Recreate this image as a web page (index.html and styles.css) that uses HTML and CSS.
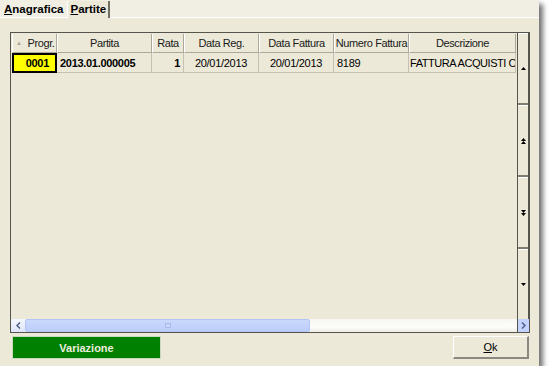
FILE: index.html
```html
<!DOCTYPE html>
<html>
<head lang="it">
    <meta charset="UTF-8">
    <title>Partite</title>
    <link rel="stylesheet" href="styles.css">
</head>
<body>
<div class="window">
    <div class="tabs">
        <div class="tab"><u>A</u>nagrafica</div>
        <div class="tab active"><u>P</u>artite</div>
    </div>
    <div class="panel">
        <div class="grid">
            <div class="gridMain">
                <div class="gridBody">
                    <div class="rows">
                        <div class="hcell first"><span class="sort">&#9650;</span>Progr.</div>
                        <div class="hcell">Partita</div>
                        <div class="hcell">Rata</div>
                        <div class="hcell">Data Reg.</div>
                        <div class="hcell">Data Fattura</div>
                        <div class="hcell">Numero Fattura</div>
                        <div class="hcell">Descrizione</div>

                        <div class="cell sel">0001</div>
                        <div class="cell bold left">2013.01.000005</div>
                        <div class="cell bold right">1</div>
                        <div class="cell center">20/01/2013</div>
                        <div class="cell center">20/01/2013</div>
                        <div class="cell left">8189</div>
                        <div class="cell left clip">FATTURA ACQUISTI C</div>
                    </div>
                </div>
                <div class="vscroll">
                    <div class="seg"><svg width="5" height="3" viewBox="0 0 5 3"><path d="M2.5 0 L5 3 L0 3Z" fill="#000"/></svg></div>
                    <div class="seg"><svg width="5" height="6" viewBox="0 0 5 6"><path d="M2.5 0 L5 3 L0 3Z M2.5 3 L5 6 L0 6Z" fill="#000"/></svg></div>
                    <div class="seg"><svg width="5" height="6" viewBox="0 0 5 6"><path d="M0 0 L5 0 L2.5 3Z M0 3 L5 3 L2.5 6Z" fill="#000"/></svg></div>
                    <div class="seg"><svg width="5" height="3" viewBox="0 0 5 3"><path d="M0 0 L5 0 L2.5 3Z" fill="#000"/></svg></div>
                </div>
            </div>
            <div class="hscroll">
                <div class="arrow"><svg width="5" height="7" viewBox="0 0 5 7"><path d="M4 0.5 L1 3.5 L4 6.5" fill="none" stroke="#4d6185" stroke-width="1.5"/></svg></div>
                <div class="track">
                    <div class="thumb"><span class="grip"></span></div>
                </div>
                <div class="arrow corner"><svg width="5" height="7" viewBox="0 0 5 7"><path d="M1 0.5 L4 3.5 L1 6.5" fill="none" stroke="#4d6185" stroke-width="1.5"/></svg></div>
            </div>
        </div>
        <div class="buttons">
            <div class="btn green">Variazione</div>
            <div class="btn ok"><u>O</u>k</div>
        </div>
    </div>
</div>
</body>
</html>
```

FILE: styles.css
```css
* {
    margin: 0;
    padding: 0;
    box-sizing: border-box;
}

body {
    background: #fff;
    font-family: "Liberation Sans", "DejaVu Sans", sans-serif;
    font-size: 11px;
    color: #000;
}

.window {
    width: 539px;
    height: 366px;
    background: #ece9d8;
    box-shadow: 4px 4px 5px rgba(0, 0, 0, 0.55);
}

.tabs {
    display: flex;
    height: 18px;
    padding: 1px 0 0 2px;
    background: #f1efe4;
    border-bottom: 1px solid #fff;
}

.tab {
    font-weight: bold;
    font-size: 11.5px;
    padding: 2px 2px 0 2px;
    height: 16px;
    margin-right: 2px;
}

.tab.active {
    background: #ece9d8;
    border-left: 1px solid #fff;
    border-right: 2px solid #716f64;
    padding: 2px 2px 0 2px;
    height: 17px;
}

.panel {
    padding: 14px 0 0 10px;
}

.grid {
    width: 520px;
    height: 301px;
    border: 1px solid #55544d;
    display: flex;
    flex-direction: column;
}

.gridMain {
    display: flex;
    height: 286px;
}

.gridBody {
    width: 506px;
    padding: 1px 0 0 1px;
    overflow: hidden;
}

.rows {
    display: grid;
    grid-template-columns: 45px 95px 32px 75px 75px 75px 107px;
    grid-template-rows: 19px 20px;
    letter-spacing: -0.3px;
}

.hcell {
    display: flex;
    align-items: center;
    justify-content: center;
    border-left: 1px solid #fff;
    border-right: 1px solid #aca899;
    border-bottom: 1px solid #aca899;
    white-space: nowrap;
    color: #1a1a1a;
    letter-spacing: -0.4px;
}

.hcell.first {
    justify-content: flex-start;
    padding-left: 3px;
}

.sort {
    font-size: 6px;
    color: #aca899;
    margin-right: 6px;
}

.cell {
    display: flex;
    align-items: center;
    border-right: 1px solid #c4c1b3;
    border-bottom: 1px solid #c4c1b3;
    padding: 0 3px;
    white-space: nowrap;
    overflow: hidden;
}

.cell.sel {
    background: #ffff00;
    border: 2px solid #000;
    justify-content: flex-end;
    font-weight: bold;
    padding-right: 6px;
}

.bold {
    font-weight: bold;
}

.left {
    justify-content: flex-start;
}

.right {
    justify-content: flex-end;
}

.center {
    justify-content: center;
}

.clip {
    padding: 0 1px;
    letter-spacing: -0.45px;
}

.vscroll {
    width: 12px;
    display: flex;
    flex-direction: column;
    border-left: 1px solid #55544d;
    border-right: 1px solid #55544d;
}

.seg {
    flex: 1;
    display: flex;
    align-items: center;
    justify-content: center;
    border-top: 1px solid #fff;
    border-bottom: 2px solid #7f7d72;
    background: #ece9d8;
}

.seg:last-child {
    border-bottom: none;
}

.hscroll {
    display: flex;
    height: 13px;
}

.arrow {
    width: 14px;
    display: flex;
    align-items: center;
    justify-content: center;
    background: linear-gradient(#f4f7fe, #dfe6fb);
}

.arrow.corner {
    width: 12px;
    background: #c3d3fd;
    border-left: 1px solid #55544d;
}

.track {
    flex: 1;
    background: linear-gradient(#f7f6ef, #fdfdfb 60%, #eeede5);
}

.thumb {
    width: 285px;
    height: 13px;
    background: linear-gradient(#cad8fc, #bccdfa);
    border: 1px solid #b3c5f5;
    border-radius: 2px;
    display: flex;
    align-items: center;
    justify-content: center;
}

.grip {
    width: 6px;
    height: 5px;
    border: 1px solid #a9bbe9;
    background: #c6d4fb;
}

.buttons {
    display: flex;
    justify-content: space-between;
    width: 519px;
    margin-top: 3px;
    padding-left: 2px;
}

.btn {
    height: 23px;
    display: flex;
    align-items: center;
    justify-content: center;
}

.btn.green {
    width: 149px;
    background: #008000;
    color: #ededde;
    font-weight: bold;
    border: 1px solid #c9d9c0;
}

.btn.ok {
    width: 76px;
    background: #ece9d8;
    border-top: 1px solid #fff;
    border-left: 1px solid #fff;
    border-right: 2px solid #8b897f;
    border-bottom: 2px solid #8b897f;
}
```
